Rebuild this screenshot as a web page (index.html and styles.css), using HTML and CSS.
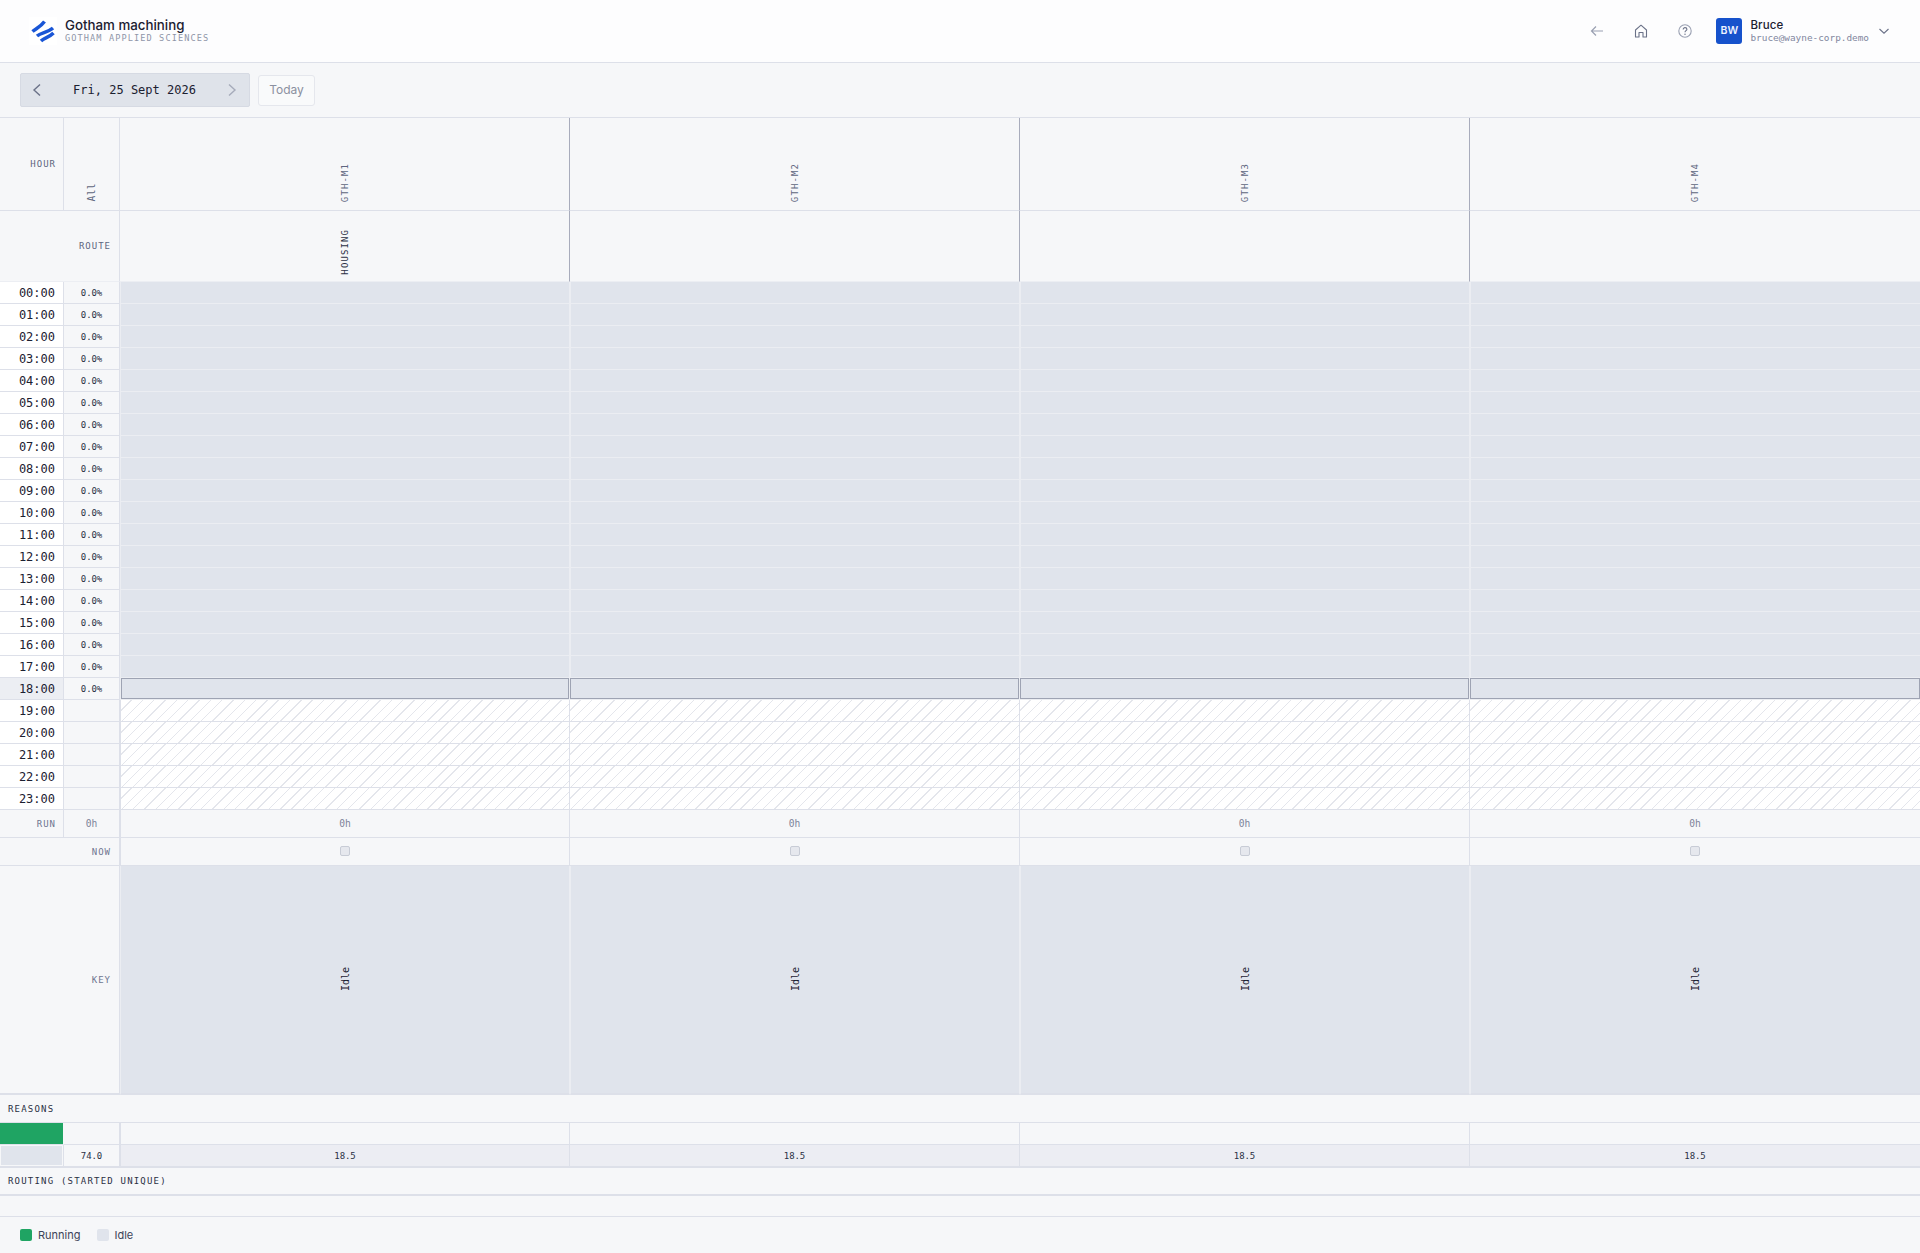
FILE: index.html
```html
<!DOCTYPE html>
<html lang="en">
<head>
<meta charset="utf-8">
<title>Gotham machining</title>
<link rel="stylesheet" href="styles.css">
</head>
<body>
<div class="page">
  <header class="topbar">
    <div class="brand">
      <div class="logo">
        <svg width="28" height="28" viewBox="0 0 28 28"><g fill="none" stroke="#1a56d6" stroke-width="3.5"><path d="M3.5 14.5 C7 11.5 12 9.5 15.5 4.5"/><path d="M8 19 C12 15.5 19 15.5 24 11"/><path d="M12 24 C15.5 20.5 20 20.5 24.5 16"/></g></svg>
      </div>
      <div class="brand-text">
        <div class="brand-name">Gotham machining</div>
        <div class="brand-sub">GOTHAM APPLIED SCIENCES</div>
      </div>
    </div>
    <div class="top-actions">
      <svg class="ico" width="16" height="16" viewBox="0 0 16 16"><path d="M14 8H2.5M7 3.5 2.5 8 7 12.5" fill="none" stroke="#9aa0b2" stroke-width="1.2"/></svg>
      <svg class="ico" width="16" height="16" viewBox="0 0 16 16"><path d="M2.5 14V7L8 2.2 13.5 7V14H10V9.5H6V14Z" fill="none" stroke="#6b7288" stroke-width="1.1" stroke-linejoin="round"/></svg>
      <svg class="ico" width="16" height="16" viewBox="0 0 16 16"><circle cx="8" cy="8" r="6.2" fill="none" stroke="#9aa0b2" stroke-width="1.1"/><path d="M6.2 6.4C6.2 4 9.9 4.2 9.9 6.3 9.9 7.7 8 7.7 8 9.3" fill="none" stroke="#6b7288" stroke-width="1.1"/><circle cx="8" cy="11.2" r=".7" fill="#6b7288"/></svg>
      <div class="user">
        <div class="avatar">BW</div>
        <div class="user-text">
          <div class="user-name">Bruce</div>
          <div class="user-mail">bruce@wayne-corp.demo</div>
        </div>
        <svg class="chev" width="12" height="12" viewBox="0 0 12 12"><path d="M1.5 4 6 8.2 10.5 4" fill="none" stroke="#6b7288" stroke-width="1.1"/></svg>
      </div>
    </div>
  </header>

  <div class="toolbar">
    <div class="datepick">
      <svg width="12" height="14" viewBox="0 0 12 14"><path d="M9 1.5 3 7l6 5.5" fill="none" stroke="#6b7288" stroke-width="1.4"/></svg>
      <span class="date">Fri, 25 Sept 2026</span>
      <svg width="12" height="14" viewBox="0 0 12 14"><path d="M3 1.5 9 7l-6 5.5" fill="none" stroke="#a6abba" stroke-width="1.4"/></svg>
    </div>
    <button class="today">Today</button>
  </div>

  <main class="board">
    <div class="row r-head">
      <div class="c c-hour lab">HOUR</div>
      <div class="c c-all"><span class="vt vall">All</span></div>
      <div class="c lane-h"><span class="vt">GTH-M1</span></div>
      <div class="c lane-h"><span class="vt">GTH-M2</span></div>
      <div class="c lane-h"><span class="vt">GTH-M3</span></div>
      <div class="c lane-h"><span class="vt">GTH-M4</span></div>
    </div>
    <div class="row r-route">
      <div class="c c-span lab">ROUTE</div>
      <div class="c lane-h"><span class="vt vdark">HOUSING</span></div>
      <div class="c lane-h"></div>
      <div class="c lane-h"></div>
      <div class="c lane-h"></div>
    </div>

    <div class="row r-h"><div class="c t">00:00</div><div class="c p">0.0%</div><div class="l f"></div><div class="l f"></div><div class="l f"></div><div class="l f"></div></div>
    <div class="row r-h"><div class="c t">01:00</div><div class="c p">0.0%</div><div class="l f"></div><div class="l f"></div><div class="l f"></div><div class="l f"></div></div>
    <div class="row r-h"><div class="c t">02:00</div><div class="c p">0.0%</div><div class="l f"></div><div class="l f"></div><div class="l f"></div><div class="l f"></div></div>
    <div class="row r-h"><div class="c t">03:00</div><div class="c p">0.0%</div><div class="l f"></div><div class="l f"></div><div class="l f"></div><div class="l f"></div></div>
    <div class="row r-h"><div class="c t">04:00</div><div class="c p">0.0%</div><div class="l f"></div><div class="l f"></div><div class="l f"></div><div class="l f"></div></div>
    <div class="row r-h"><div class="c t">05:00</div><div class="c p">0.0%</div><div class="l f"></div><div class="l f"></div><div class="l f"></div><div class="l f"></div></div>
    <div class="row r-h"><div class="c t">06:00</div><div class="c p">0.0%</div><div class="l f"></div><div class="l f"></div><div class="l f"></div><div class="l f"></div></div>
    <div class="row r-h"><div class="c t">07:00</div><div class="c p">0.0%</div><div class="l f"></div><div class="l f"></div><div class="l f"></div><div class="l f"></div></div>
    <div class="row r-h"><div class="c t">08:00</div><div class="c p">0.0%</div><div class="l f"></div><div class="l f"></div><div class="l f"></div><div class="l f"></div></div>
    <div class="row r-h"><div class="c t">09:00</div><div class="c p">0.0%</div><div class="l f"></div><div class="l f"></div><div class="l f"></div><div class="l f"></div></div>
    <div class="row r-h"><div class="c t">10:00</div><div class="c p">0.0%</div><div class="l f"></div><div class="l f"></div><div class="l f"></div><div class="l f"></div></div>
    <div class="row r-h"><div class="c t">11:00</div><div class="c p">0.0%</div><div class="l f"></div><div class="l f"></div><div class="l f"></div><div class="l f"></div></div>
    <div class="row r-h"><div class="c t">12:00</div><div class="c p">0.0%</div><div class="l f"></div><div class="l f"></div><div class="l f"></div><div class="l f"></div></div>
    <div class="row r-h"><div class="c t">13:00</div><div class="c p">0.0%</div><div class="l f"></div><div class="l f"></div><div class="l f"></div><div class="l f"></div></div>
    <div class="row r-h"><div class="c t">14:00</div><div class="c p">0.0%</div><div class="l f"></div><div class="l f"></div><div class="l f"></div><div class="l f"></div></div>
    <div class="row r-h"><div class="c t">15:00</div><div class="c p">0.0%</div><div class="l f"></div><div class="l f"></div><div class="l f"></div><div class="l f"></div></div>
    <div class="row r-h"><div class="c t">16:00</div><div class="c p">0.0%</div><div class="l f"></div><div class="l f"></div><div class="l f"></div><div class="l f"></div></div>
    <div class="row r-h"><div class="c t">17:00</div><div class="c p">0.0%</div><div class="l f"></div><div class="l f"></div><div class="l f"></div><div class="l f"></div></div>
    <div class="row r-h"><div class="c t now">18:00</div><div class="c p">0.0%</div><div class="l f cur"></div><div class="l f cur"></div><div class="l f cur"></div><div class="l f cur"></div></div>
    <div class="row r-h"><div class="c t">19:00</div><div class="c p"></div><div class="l x"></div><div class="l x"></div><div class="l x"></div><div class="l x"></div></div>
    <div class="row r-h"><div class="c t">20:00</div><div class="c p"></div><div class="l x"></div><div class="l x"></div><div class="l x"></div><div class="l x"></div></div>
    <div class="row r-h"><div class="c t">21:00</div><div class="c p"></div><div class="l x"></div><div class="l x"></div><div class="l x"></div><div class="l x"></div></div>
    <div class="row r-h"><div class="c t">22:00</div><div class="c p"></div><div class="l x"></div><div class="l x"></div><div class="l x"></div><div class="l x"></div></div>
    <div class="row r-h"><div class="c t">23:00</div><div class="c p"></div><div class="l x"></div><div class="l x"></div><div class="l x"></div><div class="l x"></div></div>

    <div class="row r-run">
      <div class="c c-hour lab light">RUN</div>
      <div class="c c-all ctr hrs">0h</div>
      <div class="c lane-s hrs">0h</div><div class="c lane-s hrs">0h</div><div class="c lane-s hrs">0h</div><div class="c lane-s hrs">0h</div>
    </div>
    <div class="row r-run">
      <div class="c c-span lab light">NOW</div>
      <div class="c lane-s"><i class="check"></i></div><div class="c lane-s"><i class="check"></i></div><div class="c lane-s"><i class="check"></i></div><div class="c lane-s"><i class="check"></i></div>
    </div>
    <div class="row r-key">
      <div class="c c-span lab light">KEY</div>
      <div class="l f k"><span class="vt vbold">Idle</span></div>
      <div class="l f k"><span class="vt vbold">Idle</span></div>
      <div class="l f k"><span class="vt vbold">Idle</span></div>
      <div class="l f k"><span class="vt vbold">Idle</span></div>
    </div>
    <div class="section s-reasons">REASONS</div>
    <div class="row r-green">
      <div class="green"></div><div class="c c-all"></div>
      <div class="c lane-s"></div><div class="c lane-s"></div><div class="c lane-s"></div><div class="c lane-s"></div>
    </div>
    <div class="row r-idle">
      <div class="c c-hour idle-cell"><i></i></div>
      <div class="c c-all ctr num">74.0</div>
      <div class="c lane-s num">18.5</div><div class="c lane-s num">18.5</div><div class="c lane-s num">18.5</div><div class="c lane-s num">18.5</div>
    </div>
    <div class="section s-routing">ROUTING (STARTED UNIQUE)</div>
    <div class="spacer"></div>
  </main>

  <footer class="legend">
    <span class="sw sw-run"></span><span class="lg">Running</span>
    <span class="sw sw-idle"></span><span class="lg">Idle</span>
  </footer>
</div>
</body>
</html>
```

FILE: styles.css
```css
* { box-sizing: border-box; }
html, body { margin: 0; padding: 0; }
body { background: #f6f7f9; color: #1b2030; font-family: "Inter", sans-serif; }
.page { width: 1920px; height: 1253px; display: flex; flex-direction: column; overflow: hidden; }

.topbar { height: 63px; flex: none; display: flex; align-items: center; justify-content: space-between; background: #fdfdfe; border-bottom: 1px solid #dde0e9; padding: 0 30px 1px 29px; }
.brand { display: flex; align-items: center; gap: 8px; }
.logo { width: 28px; height: 28px; background: #fff; }
.logo svg { display: block; }
.brand-name { font-size: 13.3px; font-weight: 500; line-height: 15px; color: #1b2030; }
.brand-sub { font-family: "DejaVu Sans Mono", monospace; font-size: 8.6px; letter-spacing: 1.1px; line-height: 10px; color: #8f95a8; }
.top-actions { display: flex; align-items: center; }
.ico { display: block; margin-right: 28px; }
.user { display: flex; align-items: center; margin-left: -5px; }
.avatar { width: 26px; height: 26px; background: #1652cc; color: #eef2ff; border-radius: 3px; font-size: 10.5px; font-weight: 600; letter-spacing: .2px; display: flex; align-items: center; justify-content: center; }
.user-text { margin-left: 8px; }
.user-name { font-size: 11.5px; font-weight: 500; line-height: 14px; letter-spacing: .1px; color: #1b2030; }
.user-mail { font-family: "DejaVu Sans Mono", monospace; font-size: 9.4px; line-height: 12px; color: #8287a0; }
.chev { margin-left: 9px; display: block; }

.toolbar { height: 55px; flex: none; display: flex; align-items: center; gap: 8px; padding: 0 20px; border-bottom: 1px solid #dde0e9; }
.datepick { width: 230px; height: 34px; background: #dfe3ea; border: 1px solid #d6dae3; border-radius: 2px; display: flex; align-items: center; justify-content: space-between; padding: 0 11px 0 10px; }
.date { font-family: "DejaVu Sans Mono", monospace; font-size: 12px; color: #1b2030; }
.today { width: 57px; height: 31px; background: #f9fafb; border: 1px solid #e5e7ed; border-radius: 3px; font-family: "Inter", sans-serif; font-size: 12px; line-height: 14px; color: #8b90a0; padding: 0; }

.board { flex: 1; display: flex; flex-direction: column; }
.row { display: grid; grid-template-columns: 64px 56px repeat(4, 450px); flex: none; }
.c { display: flex; align-items: center; justify-content: center; min-width: 0; border-right: 1px solid #dde0e9; border-bottom: 1px solid #dde0e9; }
.lab { justify-content: flex-end; font-family: "DejaVu Sans Mono", monospace; font-size: 9px; letter-spacing: 1px; color: #5e6680; }
.light { color: #6e7590; }
.c-hour { padding-right: 7px; }
.c-span { grid-column: span 2; padding-right: 8px; }

.vt { writing-mode: vertical-rl; transform: rotate(180deg); font-family: "DejaVu Sans Mono", monospace; font-size: 9px; letter-spacing: 1.1px; color: #5e6680; }
.vdark { color: #2a3044; }
.vbold { font-size: 10px; letter-spacing: 0; color: #1b2030; }
.vall { letter-spacing: .4px; font-size: 9.6px; }

.r-head { height: 93px; }
.r-head .c { align-items: flex-end; padding-bottom: 8px; }
.r-head .c-hour { align-items: center; padding-bottom: 0; }
.r-route { height: 71px; }
.r-route .c { border-bottom-color: #eceef3; }
.r-route .lane-h { align-items: flex-end; padding-bottom: 6px; }
.lane-h { border-right-color: #a8acbc; }
.lane-h:last-child { border-right: 0; }

.r-h { height: 22px; background: #ebedf2; }
.t { background: #fff; justify-content: flex-end; padding-right: 8px; font-family: "DejaVu Sans Mono", monospace; font-size: 12px; color: #1b2030; }
.t.now { background: #eceef3; }
.p { background: #f6f7f9; font-family: "DejaVu Sans Mono", monospace; font-size: 9px; letter-spacing: -.1px; color: #2a3044; }
.l { min-width: 0; }
.f { background: #e0e4ec; border-left: 1px solid #ebedf2; border-right: 1px solid #ebedf2; border-bottom: 1px solid #ebedf2; }
.f:last-child { border-right: 0; }
.cur { border: 1px solid #9ea3b3; margin: 0 1px 1px 0; }
.p + .cur { margin-left: 1px; }
.cur:last-child { border-right: 1px solid #9ea3b3; margin-right: 0; }
.x { border-right: 1px solid #dde0e9; border-bottom: 1px solid #dde0e9; background: repeating-linear-gradient(135deg, #fff 0, #fff 7px, #e4e6ec 7px, #e4e6ec 8px); }
.x:last-child { border-right: 0; }
.p + .x { border-left: 1px solid #dde0e9; }

.r-run { height: 28px; }
.lane-s { border-right-color: #dde0e9; }
.lane-s:last-child { border-right: 0; }
.c-all + .lane-s, .c-span + .lane-s { border-left: 1px solid #dde0e9; }
.hrs { font-family: "DejaVu Sans Mono", monospace; font-size: 9.6px; color: #7d8399; }
.check { display: block; width: 10px; height: 10px; margin-bottom: 2px; background: #e6e8ee; border: 1px solid #c8ccd6; border-radius: 2px; }

.r-key { height: 229px; }
.r-key .c-span { border-bottom-width: 2px; }
.k { display: flex; align-items: center; justify-content: center; border-bottom: 2px solid #dde0e9; }

.section { flex: none; font-family: "DejaVu Sans Mono", monospace; font-size: 9px; letter-spacing: 1.2px; color: #2a3044; padding-left: 8px; display: flex; align-items: center; }
.s-reasons { height: 28px; border-bottom: 1px solid #dde0e9; }
.r-green { height: 22px; }
.green { background: #1fa463; border-bottom: 1px solid #dde0e9; border-right: 1px solid #f6f7f9; }
.r-idle { height: 23px; background: #ecedf3; }
.r-idle .c { border-bottom-width: 2px; }
.r-idle .c-all { background: #f6f7f9; }
.idle-cell { background: #f6f7f9; padding: 1px; }
.idle-cell i { display: block; width: 100%; height: 100%; background: #e0e4ec; }
.num { font-family: "DejaVu Sans Mono", monospace; font-size: 9px; letter-spacing: -.1px; color: #2a3044; }
.s-routing { height: 28px; border-bottom: 2px solid #dde0e9; }
.spacer { height: 21px; flex: none; border-bottom: 1px solid #dde0e9; }

.legend { flex: 1; display: flex; align-items: center; padding-left: 20px; }
.sw { width: 12px; height: 12px; border-radius: 2px; }
.sw-run { background: #1fa463; }
.sw-idle { background: #e0e4ec; margin-left: 16px; }
.lg { font-size: 11px; color: #3c4358; margin-left: 6px; }
```
